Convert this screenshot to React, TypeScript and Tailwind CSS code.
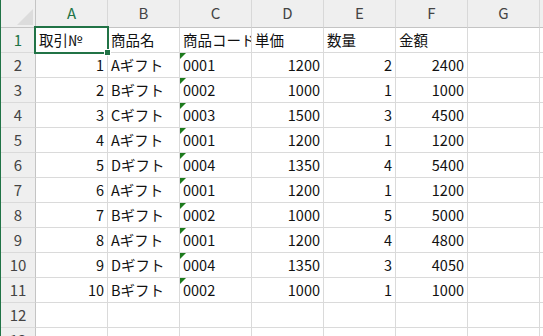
import React from "react"

const cols = ["A", "B", "C", "D", "E", "F", "G"]

type Row = (string | number)[]

const rows: Row[] = [
  ["取引№", "商品名", "商品コード", "単価", "数量", "金額"],
  [1, "Aギフト", "0001", 1200, 2, 2400],
  [2, "Bギフト", "0002", 1000, 1, 1000],
  [3, "Cギフト", "0003", 1500, 3, 4500],
  [4, "Aギフト", "0001", 1200, 1, 1200],
  [5, "Dギフト", "0004", 1350, 4, 5400],
  [6, "Aギフト", "0001", 1200, 1, 1200],
  [7, "Bギフト", "0002", 1000, 5, 5000],
  [8, "Aギフト", "0001", 1200, 4, 4800],
  [9, "Dギフト", "0004", 1350, 3, 4050],
  [10, "Bギフト", "0002", 1000, 1, 1000],
  [],
  [],
]

const font = { fontFamily: '"Noto Sans CJK JP", "Noto Sans", sans-serif' }

// little green "number stored as text" marker
const TextFlag = () => (
  <svg width="6" height="6" viewBox="0 0 6 6" className="absolute left-0 top-0">
    <polygon points="0,0 6,0 0,6" fill="#1c7a1c" />
  </svg>
)

function Cell({ value, col, rowIdx }: { value?: string | number; col: number; rowIdx: number }) {
  const isNum = typeof value === "number"
  const flagged = col === 2 && rowIdx > 0 && rowIdx <= 10
  return (
    <div
      className={
        "relative flex h-[25px] items-center overflow-hidden whitespace-nowrap border-r border-b border-[#dadada] px-[3px] pt-[1px] text-[14.5px] text-[#111] " +
        (isNum ? "justify-end" : "justify-start")
      }
    >
      {flagged && <TextFlag />}
      <span className="leading-none">{value ?? ""}</span>
    </div>
  )
}

export default function App() {
  return (
    <div className="relative h-[336px] w-[543px] overflow-hidden border-l border-[#217346] bg-white" style={font}>
      <div className="grid grid-cols-[35px_repeat(8,72px)]">
        {/* corner */}
        <div className="relative h-[28px] border-r border-b border-[#c4c4c4] bg-[#efefef]">
          <svg width="16" height="16" viewBox="0 0 16 16" className="absolute right-[2px] bottom-[2px]">
            <polygon points="16,0 16,16 0,16" fill="#dcdcdc" />
          </svg>
        </div>
        {cols.concat([""]).map((c, i) => (
          <div
            key={c + i}
            className={
              "flex h-[28px] items-center justify-center border-r border-b border-r-[#d8d8d8] border-b-[#c4c4c4] bg-[#efefef] text-[15px] " +
              (i === 0 ? "text-[#217346]" : "text-[#444]")
            }
          >
            {c}
          </div>
        ))}

        {rows.map((r, ri) => (
          <React.Fragment key={ri}>
            <div
              className={
                "flex h-[25px] items-center justify-center border-r border-b border-r-[#c4c4c4] border-b-[#dadada] bg-[#efefef] text-[15px] " +
                (ri === 0 ? "text-[#217346]" : "text-[#444]")
              }
            >
              {ri + 1}
            </div>
            {Array.from({ length: 8 }).map((_, ci) => (
              <Cell key={ci} value={r[ci]} col={ci} rowIdx={ri} />
            ))}
          </React.Fragment>
        ))}
      </div>

      {/* active cell A1 */}
      <div className="pointer-events-none absolute left-[33px] top-[26px] h-[28px] w-[75px] border-2 border-[#217346]" />
      <div className="pointer-events-none absolute left-[103px] top-[49px] h-[7px] w-[7px] border border-white bg-[#217346]" />
    </div>
  )
}
